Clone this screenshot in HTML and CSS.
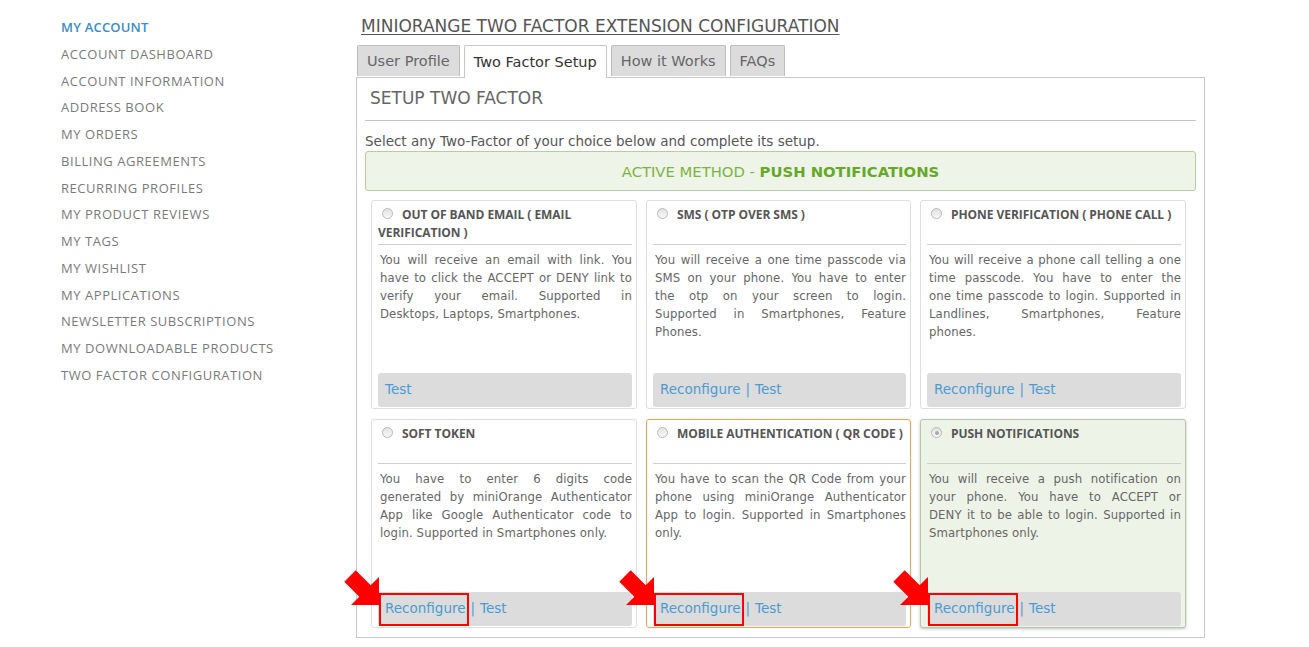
FILE: index.html
```html
<!DOCTYPE html>
<html lang="en">
<head>
<meta charset="utf-8">
<title>miniOrange Two Factor Extension Configuration</title>
<link rel="stylesheet" href="styles.css">
</head>
<body>
<div class="page">
  <aside class="sidebar">
    <ul class="nav">
      <li class="nav-item current">MY ACCOUNT</li>
      <li class="nav-item">ACCOUNT DASHBOARD</li>
      <li class="nav-item">ACCOUNT INFORMATION</li>
      <li class="nav-item">ADDRESS BOOK</li>
      <li class="nav-item">MY ORDERS</li>
      <li class="nav-item">BILLING AGREEMENTS</li>
      <li class="nav-item">RECURRING PROFILES</li>
      <li class="nav-item">MY PRODUCT REVIEWS</li>
      <li class="nav-item">MY TAGS</li>
      <li class="nav-item">MY WISHLIST</li>
      <li class="nav-item">MY APPLICATIONS</li>
      <li class="nav-item">NEWSLETTER SUBSCRIPTIONS</li>
      <li class="nav-item">MY DOWNLOADABLE PRODUCTS</li>
      <li class="nav-item">TWO FACTOR CONFIGURATION</li>
    </ul>
  </aside>
  <main class="main">
    <h1 class="title">MINIORANGE TWO FACTOR EXTENSION CONFIGURATION</h1>
    <div class="tabs">
      <span class="tab">User Profile</span>
      <span class="tab active">Two Factor Setup</span>
      <span class="tab">How it Works</span>
      <span class="tab">FAQs</span>
    </div>
    <section class="panel">
      <h2 class="panel-title">SETUP TWO FACTOR</h2>
      <p class="intro">Select any Two-Factor of your choice below and complete its setup.</p>
      <div class="active-method">ACTIVE METHOD - <strong>PUSH NOTIFICATIONS</strong></div>
      <div class="cards">
        <div class="card">
          <div class="card-head"><span class="radio"></span><span class="card-title">OUT OF BAND EMAIL ( EMAIL VERIFICATION )</span></div>
          <p class="card-desc"><span class="ln">You will receive an email with link. You</span><span class="ln">have to click the ACCEPT or DENY link to</span><span class="ln">verify your email. Supported in</span><span class="ln last">Desktops, Laptops, Smartphones.</span></p>
          <div class="card-foot"><a class="link">Test</a></div>
        </div>
        <div class="card">
          <div class="card-head"><span class="radio"></span><span class="card-title">SMS ( OTP OVER SMS )</span></div>
          <p class="card-desc"><span class="ln">You will receive a one time passcode via</span><span class="ln">SMS on your phone. You have to enter</span><span class="ln">the otp on your screen to login.</span><span class="ln">Supported in Smartphones, Feature</span><span class="ln last">Phones.</span></p>
          <div class="card-foot"><a class="link">Reconfigure</a><span class="sep">|</span><a class="link">Test</a></div>
        </div>
        <div class="card">
          <div class="card-head"><span class="radio"></span><span class="card-title">PHONE VERIFICATION ( PHONE CALL )</span></div>
          <p class="card-desc"><span class="ln">You will receive a phone call telling a one</span><span class="ln">time passcode. You have to enter the</span><span class="ln">one time passcode to login. Supported in</span><span class="ln">Landlines, Smartphones, Feature</span><span class="ln last">phones.</span></p>
          <div class="card-foot"><a class="link">Reconfigure</a><span class="sep">|</span><a class="link">Test</a></div>
        </div>
        <div class="card">
          <div class="card-head"><span class="radio"></span><span class="card-title">SOFT TOKEN</span></div>
          <p class="card-desc"><span class="ln">You have to enter 6 digits code</span><span class="ln">generated by miniOrange Authenticator</span><span class="ln">App like Google Authenticator code to</span><span class="ln last">login. Supported in Smartphones only.</span></p>
          <div class="card-foot"><a class="link">Reconfigure</a><span class="sep">|</span><a class="link">Test</a>
            <span class="highlight"></span>
            <svg class="arrow" viewBox="0 0 45 48" width="45" height="48"><polygon points="15.7,9.3 30.7,24.3 39,16 39,44 11,44 19.3,35.7 4.3,20.7" fill="#ff0000"/></svg>
          </div>
        </div>
        <div class="card card-configured">
          <div class="card-head"><span class="radio"></span><span class="card-title">MOBILE AUTHENTICATION ( QR CODE )</span></div>
          <p class="card-desc"><span class="ln">You have to scan the QR Code from your</span><span class="ln">phone using miniOrange Authenticator</span><span class="ln">App to login. Supported in Smartphones</span><span class="ln last">only.</span></p>
          <div class="card-foot"><a class="link">Reconfigure</a><span class="sep">|</span><a class="link">Test</a>
            <span class="highlight"></span>
            <svg class="arrow" viewBox="0 0 45 48" width="45" height="48"><polygon points="15.7,9.3 30.7,24.3 39,16 39,44 11,44 19.3,35.7 4.3,20.7" fill="#ff0000"/></svg>
          </div>
        </div>
        <div class="card card-active">
          <div class="card-head"><span class="radio checked"></span><span class="card-title">PUSH NOTIFICATIONS</span></div>
          <p class="card-desc"><span class="ln">You will receive a push notification on</span><span class="ln">your phone. You have to ACCEPT or</span><span class="ln">DENY it to be able to login. Supported in</span><span class="ln last">Smartphones only.</span></p>
          <div class="card-foot"><a class="link">Reconfigure</a><span class="sep">|</span><a class="link">Test</a>
            <span class="highlight"></span>
            <svg class="arrow" viewBox="0 0 45 48" width="45" height="48"><polygon points="15.7,9.3 30.7,24.3 39,16 39,44 11,44 19.3,35.7 4.3,20.7" fill="#ff0000"/></svg>
          </div>
        </div>
      </div>
    </section>
  </main>
</div>
</body>
</html>
```
FILE: styles.css
```css
* { box-sizing: border-box; }
html, body { margin: 0; padding: 0; background: #fff; }
body { font-family: "DejaVu Sans", sans-serif; color: #555; }

.page { display: flex; align-items: flex-start; }

.sidebar { width: 356px; padding: 14px 0 0 61px; flex: none; }
.nav { list-style: none; margin: 0; padding: 0; }
.nav-item {
  font-family: "Open Sans", sans-serif;
  font-size: 13px;
  line-height: 26.75px;
  color: #7a7a7a;
  letter-spacing: 0.55px;
  white-space: nowrap;
}
.nav-item.current { color: #3a8ccb; font-weight: 600; letter-spacing: 0.2px; }

.main { width: 849px; flex: none; }
.title {
  margin: 16px 0 9px 5px;
  font-size: 17px;
  line-height: 20px;
  font-weight: normal;
  color: #555;
  text-decoration: underline;
  text-underline-offset: 2px;
}

.tabs { display: flex; gap: 4px; margin-left: 1px; height: 32px; align-items: flex-start; }
.tab {
  display: block;
  height: 31px;
  padding: 0 9px;
  line-height: 30px;
  font-size: 14.5px;
  color: #666;
  background: #dcdcdc;
  border: 1px solid #bdbdbd;
  border-bottom: none;
  border-radius: 2px 2px 0 0;
}
.tab.active {
  height: 33px;
  background: #fff;
  color: #333;
  border-color: #c7c7c7;
  position: relative;
  z-index: 1;
  line-height: 32px;
}

.panel {
  border: 1px solid #c9c9c9;
  padding: 10px 8px 8px 8px;
  height: 561px;
}
.panel-title {
  margin: 0;
  padding: 0 0 12px 5px;
  font-size: 17px;
  line-height: 20px;
  font-weight: normal;
  color: #666;
  border-bottom: 1px solid #c4c4c4;
}
.intro { margin: 12px 0 2px 0; font-size: 13.5px; line-height: 16px; color: #555; }

.active-method {
  height: 40px;
  border: 1px solid #b6cda3;
  border-radius: 3px;
  background: #eef5e8;
  text-align: center;
  font-size: 14.8px;
  line-height: 39px;
  color: #7cb342;
}
.active-method strong { color: #66a82a; font-weight: bold; }

.cards {
  display: grid;
  grid-template-columns: 266px 265px 266px;
  grid-auto-rows: 209px;
  column-gap: 9px;
  row-gap: 10px;
  padding-left: 6px;
  margin-top: 9px;
}

.card {
  display: flex;
  flex-direction: column;
  border: 1px solid #dedede;
  border-radius: 3px;
  padding: 0 4px 1px 6px;
  background: #fff;
}
.card-configured { border-color: #f6a44c; }
.card-active {
  background: #eef3e8;
  border-color: #b9c6ab;
  box-shadow: 0 1px 3px rgba(0,0,0,0.25);
}

.card-head {
  height: 44px;
  padding: 5px 0 0 0;
  border-bottom: 1px solid #cfcfcf;
  flex: none;
  font-size: 12px;
  line-height: 18px;
}
.card-title {
  font-family: "Open Sans", sans-serif;
  font-weight: bold;
  font-size: 12px;
  line-height: 18px;
  letter-spacing: -0.05px;
  color: #555;
}
.radio {
  display: inline-block;
  width: 11px;
  height: 11px;
  margin: 0 9px 0 4px;
  border: 1px solid #b9b9b9;
  border-radius: 50%;
  background: linear-gradient(#e2e2e2, #f8f8f8);
  vertical-align: 0;
  position: relative;
}
.radio.checked::after {
  content: "";
  position: absolute;
  left: 2.5px; top: 2.5px;
  width: 4px; height: 4px;
  border-radius: 50%;
  background: #a9a9a9;
}

.card-desc {
  flex: 1;
  margin: 0;
  padding: 6px 0 0 2px;
  font-family: "DejaVu Sans Condensed", "DejaVu Sans", sans-serif;
  font-size: 13px;
  line-height: 18px;
  letter-spacing: 0.1px;
  color: #666;
}
.ln { display: block; text-align: justify; text-align-last: justify; }
.ln.last { text-align-last: left; }

.card-foot {
  position: relative;
  height: 34px;
  flex: none;
  padding-left: 7px;
  background: #dcdcdc;
  border-radius: 3px;
  font-size: 13.5px;
  line-height: 33px;
}
.link { color: #4b9bd2; cursor: pointer; }
.sep { color: #4b9bd2; margin: 0 5px; }

.highlight {
  position: absolute;
  left: 1px; top: 1px;
  width: 90px; height: 33px;
  border: 2px solid #ff0000;
}
.arrow {
  position: absolute;
  left: -38px; top: -31px;
}
```
